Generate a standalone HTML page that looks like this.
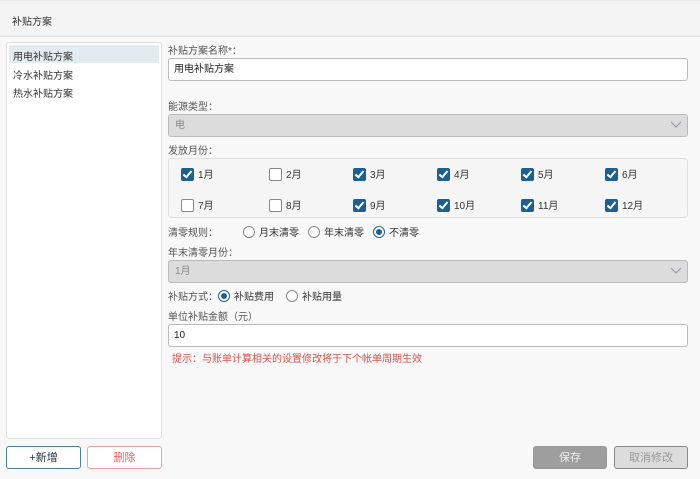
<!DOCTYPE html>
<html><head><meta charset="utf-8"><style>
*{box-sizing:border-box;margin:0;padding:0}
body{width:700px;height:479px;background:#f8f8f8;font-family:"Liberation Sans","Noto Sans CJK SC",sans-serif;font-size:10px;color:#333;position:relative;overflow:hidden}
.a{position:absolute;white-space:nowrap}
.hdr{left:0;top:0;width:700px;height:37px;background:#f4f4f4;border-bottom:1px solid #e2e2e2;border-top:1px solid #e8e8e8}
.lbl{color:#555}
.inp{background:#fff;border:1px solid #bbb;border-radius:3px;height:23px;left:168px;width:520px;padding-left:5px;line-height:22px;color:#222}
.sel{background:#dcdcdc;border:1px solid #bbb;border-radius:3px;height:23px;left:168px;width:520px;padding-left:6px;line-height:22px;color:#888}
.cb{width:13px;height:13px;border-radius:2px;display:inline-block;vertical-align:middle;margin-right:4px;position:relative;top:-1px}
.on{background:#1d5f8f}
.on:after{content:"";position:absolute;left:4px;top:1px;width:3px;height:7px;border:solid #fff;border-width:0 2px 2px 0;transform:rotate(40deg)}
.off{background:#fff;border:1px solid #888}
.rd{width:12px;height:12px;border-radius:50%;border:1px solid #888;background:#fff;display:inline-block;vertical-align:middle;margin-right:4px;position:relative;top:-1px}
.rd.s{border-color:#1d5f8f}
.rd.s:after{content:"";position:absolute;left:2px;top:2px;width:6px;height:6px;border-radius:50%;background:#1d5f8f}
.btn{height:23px;border-radius:3px;text-align:center;line-height:22px;font-size:11px}
</style></head><body>
<div class="a hdr"></div>
<div class="a" style="left:12px;top:13px;font-size:10px;color:#333">补贴方案</div>
<div class="a" style="left:6px;top:42px;width:156px;height:397px;background:#fff;border:1px solid #e2e2e2;border-radius:3px"></div>
<div class="a" style="left:9px;top:45px;width:150px;height:18px;background:#e2ecf0"></div>
<div class="a" style="left:13px;top:48px">用电补贴方案</div>
<div class="a" style="left:13px;top:67px">冷水补贴方案</div>
<div class="a" style="left:13px;top:85px">热水补贴方案</div>
<div class="a btn" style="left:6px;top:446px;width:75px;border:1px solid #4a7fa3;background:#fff;color:#234">+新增</div>
<div class="a btn" style="left:87px;top:446px;width:75px;border:1px solid #e3a3a3;background:#fff;color:#d66">删除</div>
<div class="a lbl" style="left:168px;top:42px">补贴方案名称*：</div>
<div class="a inp" style="top:58px">用电补贴方案</div>
<div class="a lbl" style="left:168px;top:98px">能源类型：</div>
<div class="a sel" style="top:114px">电</div>
<svg class="a" style="left:670px;top:121px" width="12" height="8"><path d="M1 1L6 6L11 1" stroke="#99a" fill="none" stroke-width="1.2"/></svg>
<div class="a lbl" style="left:168px;top:142px">发放月份：</div>
<div class="a" style="left:168px;top:158px;width:520px;height:60px;border:1px solid #e0e0e0;border-radius:4px;background:#f5f5f5"></div>
<div class="a" style="left:181px;top:166px"><span class="cb on"></span>1月</div>
<div class="a" style="left:269px;top:166px"><span class="cb off"></span>2月</div>
<div class="a" style="left:353px;top:166px"><span class="cb on"></span>3月</div>
<div class="a" style="left:437px;top:166px"><span class="cb on"></span>4月</div>
<div class="a" style="left:521px;top:166px"><span class="cb on"></span>5月</div>
<div class="a" style="left:605px;top:166px"><span class="cb on"></span>6月</div>
<div class="a" style="left:181px;top:197px"><span class="cb off"></span>7月</div>
<div class="a" style="left:269px;top:197px"><span class="cb off"></span>8月</div>
<div class="a" style="left:353px;top:197px"><span class="cb on"></span>9月</div>
<div class="a" style="left:437px;top:197px"><span class="cb on"></span>10月</div>
<div class="a" style="left:521px;top:197px"><span class="cb on"></span>11月</div>
<div class="a" style="left:605px;top:197px"><span class="cb on"></span>12月</div>
<div class="a lbl" style="left:168px;top:224px">清零规则：</div>
<div class="a" style="left:243px;top:224px"><span class="rd"></span>月末清零</div>
<div class="a" style="left:308px;top:224px"><span class="rd"></span>年末清零</div>
<div class="a" style="left:373px;top:224px"><span class="rd s"></span>不清零</div>
<div class="a lbl" style="left:168px;top:244px">年末清零月份：</div>
<div class="a sel" style="top:260px">1月</div>
<svg class="a" style="left:670px;top:267px" width="12" height="8"><path d="M1 1L6 6L11 1" stroke="#99a" fill="none" stroke-width="1.2"/></svg>
<div class="a lbl" style="left:168px;top:288px">补贴方式：</div>
<div class="a" style="left:218px;top:288px"><span class="rd s"></span>补贴费用</div>
<div class="a" style="left:286px;top:288px"><span class="rd"></span>补贴用量</div>
<div class="a lbl" style="left:168px;top:308px">单位补贴金额（元）</div>
<div class="a inp" style="top:324px">10</div>
<div class="a" style="left:172px;top:350px;color:#d9534f">提示：与账单计算相关的设置修改将于下个帐单周期生效</div>
<div class="a btn" style="left:533px;top:446px;width:74px;background:#9e9e9e;border:1px solid #999;color:#eee">保存</div>
<div class="a btn" style="left:614px;top:446px;width:74px;background:#dcdcdc;border:1px solid #888;color:#999">取消修改</div>
</body></html>
